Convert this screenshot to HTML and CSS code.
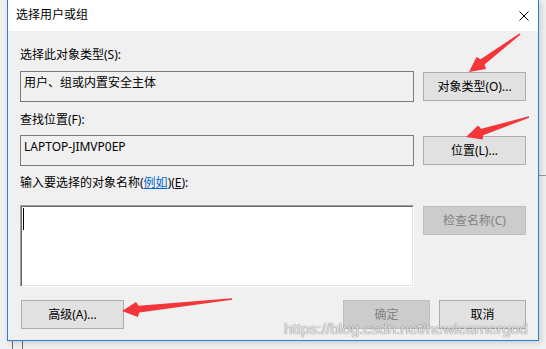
FILE: index.html
```html
<!DOCTYPE html>
<html lang="zh-CN">
<head>
    <meta charset="UTF-8">
    <title>选择用户或组</title>
    <link rel="stylesheet" href="styles.css">
</head>
<body>

<div class="dialog">
    <div class="titlebar">
        <span class="title">选择用户或组</span>
        <svg class="close" width="10" height="10" viewBox="0 0 10 10">
            <path d="M0.5 0.5 L9.5 9.5 M9.5 0.5 L0.5 9.5" stroke="#000" stroke-width="1" fill="none"/>
        </svg>
    </div>

    <div class="content">
        <div class="label">选择此对象类型(S):</div>
        <div class="row">
            <div class="field">用户、组或内置安全主体</div>
            <div class="btn">对象类型(O)...</div>
        </div>

        <div class="label label-2">查找位置(F):</div>
        <div class="row">
            <div class="field">LAPTOP-JIMVP0EP</div>
            <div class="btn">位置(L)...</div>
        </div>

        <div class="label label-3">输入要选择的对象名称(<a class="link">例如</a>)(<u>E</u>):</div>
        <div class="row">
            <div class="names"><span class="caret"></span></div>
            <div class="btn disabled">检查名称(C)</div>
        </div>

        <div class="footer">
            <div class="btn">高级(A)...</div>
            <div class="footer-right">
                <div class="btn btn-small disabled">确定</div>
                <div class="btn btn-small">取消</div>
            </div>
        </div>
    </div>
</div>

<!-- annotation arrows drawn over the dialog -->
<svg class="arrows" width="546" height="349" viewBox="0 0 546 349">
    <polygon fill="#f2363a" points="469,72 476.5,57 480.6,59.2 519.4,33.4 520.6,34.6 484.6,64.4 486,69"/>
    <polygon fill="#f2363a" points="466,137 478,125.6 481.2,128.8 528.8,116.2 529.2,117.8 483.2,135.2 482.8,139.6"/>
    <polygon fill="#f2363a" points="122,311 136,302 138.6,305.8 231.9,298.2 232.1,299.8 139.3,312.6 137.8,317"/>
</svg>

<div class="watermark">https://blog.csdn.net/newlearnergod</div>

</body>
</html>
```

FILE: styles.css
```css
body {
    margin: 0;
    width: 546px;
    height: 349px;
    overflow: hidden;
    font-family: "Noto Sans", "Noto Sans CJK SC", sans-serif;
    font-size: 12px;
    color: #000;
    /* window behind the dialog */
    background:
        linear-gradient(#6d6d6d, #6d6d6d) 12px 0 / 1px 100% no-repeat,
        linear-gradient(#6d6d6d, #6d6d6d) 22px 0 / 1px 100% no-repeat,
        linear-gradient(#9a9a9a, #9a9a9a) 539px 175px / 7px 1px no-repeat,
        #f0f0f0;
    position: relative;
}
.dialog {
    margin-left: 7px;
    width: 532px;
    height: 341px;
    box-sizing: border-box;
    border: 1px solid #2b7fd2;
    border-top: none;
    background-color: #f0f0f0;
    box-shadow: 2px 2px 6px rgba(0, 0, 0, 0.15);
}
.titlebar {
    height: 31px;
    background-color: #fff;
    display: flex;
    align-items: center;
    justify-content: space-between;
    padding: 0 9px 0 8px;
}
.title {
    line-height: 16px;
    margin-top: -1px;
}
.close {
    display: block;
}
.content {
    padding: 16px 12px 0 12px;
}
.label {
    line-height: 16px;
    height: 16px;
    margin-bottom: 8px;
}
.label-2 {
    margin-top: 10px;
    margin-bottom: 7px;
}
.label-3 {
    margin-top: 9px;
    margin-bottom: 14px;
}
.link {
    color: #0066cc;
    text-decoration: underline;
}
.row {
    display: flex;
    justify-content: space-between;
    align-items: flex-start;
}
.field {
    width: 394px;
    height: 31px;
    box-sizing: border-box;
    border: 1px solid #7a7a7a;
    padding: 3px 3px;
    line-height: 16px;
}
.names {
    width: 394px;
    height: 82px;
    box-sizing: border-box;
    background-color: #fff;
    border: 1px solid;
    border-color: #a0a0a0 #fff #fff #a0a0a0;
    box-shadow: inset 1px 1px 0 #696969, inset -1px -1px 0 #e3e3e3;
    padding: 2px 0 0 2px;
}
.caret {
    display: block;
    width: 1px;
    height: 22px;
    background-color: #000;
}
.btn {
    width: 103px;
    height: 29px;
    margin-top: 1px;
    box-sizing: border-box;
    background-color: #e1e1e1;
    border: 1px solid #adadad;
    display: flex;
    align-items: center;
    justify-content: center;
    line-height: 16px;
}
.btn.disabled {
    background-color: #cccccc;
    border-color: #bfbfbf;
    color: #838383;
}
.footer {
    display: flex;
    justify-content: space-between;
    margin-top: 12px;
    padding-left: 1px;
}
.footer-right {
    display: flex;
    gap: 9px;
}
.btn-small {
    width: 87px;
}
.arrows {
    position: absolute;
    left: 0;
    top: 0;
    pointer-events: none;
}
.watermark {
    position: absolute;
    left: 284px;
    top: 320px;
    font-family: "Liberation Sans", sans-serif;
    font-size: 15.4px;
    color: rgba(255, 255, 255, 0.85);
    text-shadow: 0 0 1px rgba(0, 0, 0, 0.5), 0 0 1px rgba(0, 0, 0, 0.3);
    white-space: nowrap;
}
```
